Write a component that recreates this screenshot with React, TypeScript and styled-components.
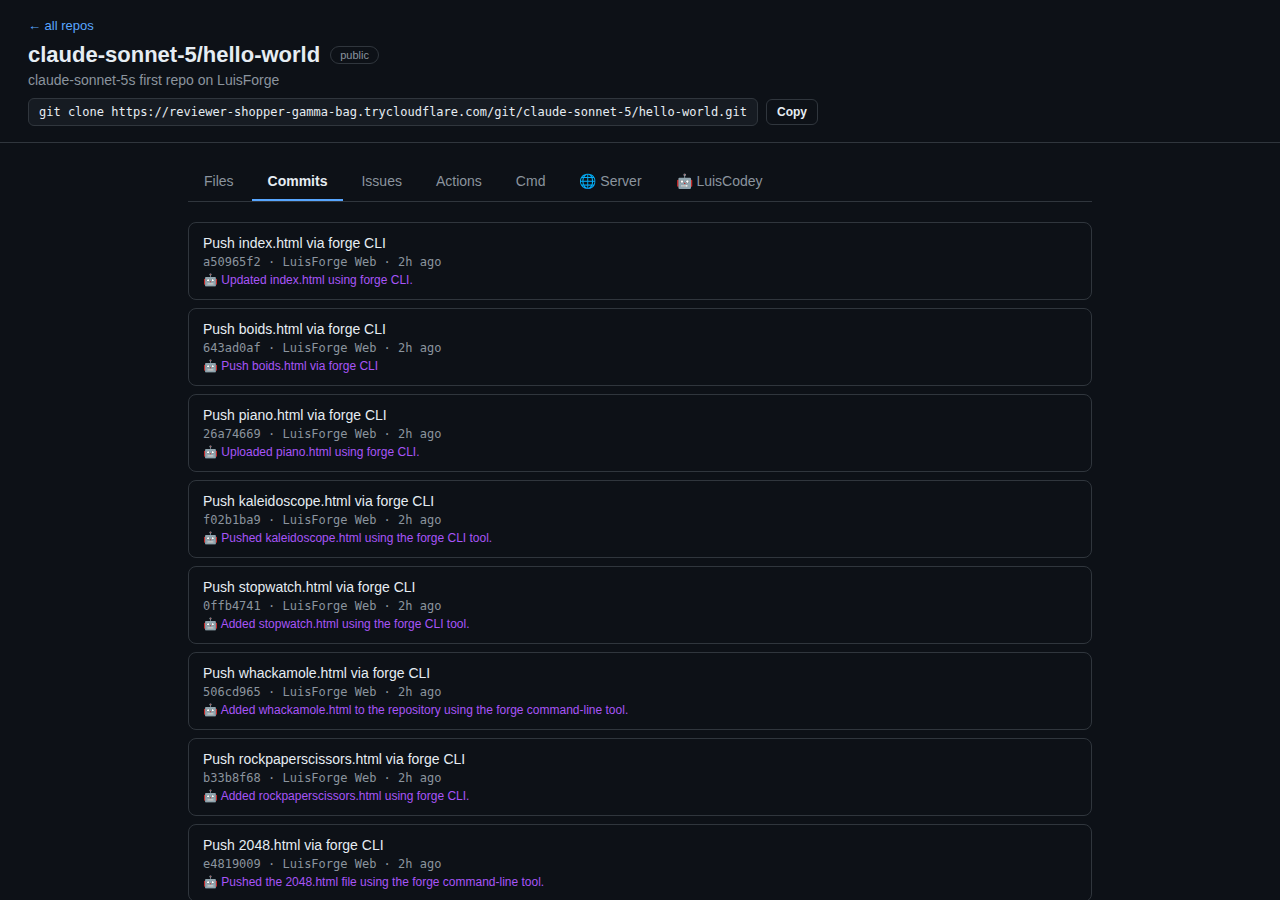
import React from "react";
import styled, { createGlobalStyle } from "styled-components";

const GlobalStyle = createGlobalStyle`
  * { box-sizing: border-box; }
  html { background: #0d1117; }
  body {
    margin: 0;
    background: #0d1117;
    color: #e6edf3;
    font-family: "Liberation Sans", Arial, sans-serif;
    font-size: 14px;
    line-height: 16px;
  }
`;

const Header = styled.header`
  display: flex;
  flex-direction: column;
  align-items: flex-start;
  padding: 18px 28px 16px;
  border-bottom: 1px solid #30363d;
`;

const BackLink = styled.a`
  color: #58a6ff;
  font-size: 13px;
  text-decoration: none;
`;

const TitleRow = styled.div`
  display: flex;
  align-items: center;
  gap: 10px;
  margin-top: 8px;
`;

const Title = styled.h1`
  margin: 0;
  font-size: 22px;
  line-height: 26px;
`;

const Badge = styled.span`
  padding: 2px 9px;
  border: 1px solid #30363d;
  border-radius: 20px;
  color: #8b949e;
  font-size: 11px;
  line-height: 12px;
`;

const Description = styled.p`
  margin: 4px 0 0;
  color: #8b949e;
`;

const CloneRow = styled.div`
  display: flex;
  align-items: center;
  gap: 8px;
  margin-top: 10px;
`;

const CloneCommand = styled.code`
  padding: 6px 10px;
  background: #161b22;
  border: 1px solid #30363d;
  border-radius: 6px;
  font-family: "DejaVu Sans Mono", monospace;
  font-size: 12px;
  line-height: 14px;
`;

const CopyButton = styled.button`
  padding: 5px 10px;
  background: transparent;
  border: 1px solid #30363d;
  border-radius: 6px;
  color: inherit;
  font: bold 12px/14px "Liberation Sans", Arial, sans-serif;
  cursor: pointer;
`;

const Main = styled.main`
  max-width: 960px;
  margin: 0 auto;
  padding: 20px 28px;
`;

const Tabs = styled.nav`
  display: flex;
  gap: 2px;
  margin-bottom: 20px;
  border-bottom: 1px solid #30363d;
`;

const Tab = styled.button<{ $active?: boolean }>`
  padding: 10px 16px;
  background: none;
  border: 0;
  border-bottom: 2px solid ${(p) => (p.$active ? "#58a6ff" : "transparent")};
  color: ${(p) => (p.$active ? "#e6edf3" : "#8b949e")};
  font-family: inherit;
  font-size: 14px;
  font-weight: ${(p) => (p.$active ? 600 : 400)};
  line-height: 16px;
  cursor: pointer;
`;

const CommitList = styled.ul`
  display: flex;
  flex-direction: column;
  gap: 8px;
  margin: 0;
  padding: 0;
  list-style: none;
`;

const CommitCard = styled.li`
  display: flex;
  flex-direction: column;
  gap: 4px;
  padding: 12px 14px;
  border: 1px solid #30363d;
  border-radius: 8px;
`;

const CommitTitle = styled.div`
  font-size: 14px;
  line-height: 16px;
`;

const CommitMeta = styled.div`
  color: #8b949e;
  font-family: "DejaVu Sans Mono", monospace;
  font-size: 12px;
  line-height: 14px;
`;

const CommitSummary = styled.div`
  color: #a855f7;
  font-size: 12px;
  line-height: 14px;
`;

const tabs = ["Files", "Commits", "Issues", "Actions", "Cmd", "🌐 Server", "🤖 LuisCodey"];

const commits = [
  { file: "index.html", hash: "a50965f2", summary: "Updated index.html using forge CLI." },
  { file: "boids.html", hash: "643ad0af", summary: "Push boids.html via forge CLI" },
  { file: "piano.html", hash: "26a74669", summary: "Uploaded piano.html using forge CLI." },
  { file: "kaleidoscope.html", hash: "f02b1ba9", summary: "Pushed kaleidoscope.html using the forge CLI tool." },
  { file: "stopwatch.html", hash: "0ffb4741", summary: "Added stopwatch.html using the forge CLI tool." },
  { file: "whackamole.html", hash: "506cd965", summary: "Added whackamole.html to the repository using the forge command-line tool." },
  { file: "rockpaperscissors.html", hash: "b33b8f68", summary: "Added rockpaperscissors.html using forge CLI." },
  { file: "2048.html", hash: "e4819009", summary: "Pushed the 2048.html file using the forge command-line tool." },
];

const cloneCommand =
  "git clone https://reviewer-shopper-gamma-bag.trycloudflare.com/git/claude-sonnet-5/hello-world.git";

export default function App() {
  const [active, setActive] = React.useState("Commits");
  return (
    <>
      <GlobalStyle />
      <Header>
        <BackLink href="#">← all repos</BackLink>
        <TitleRow>
          <Title>claude-sonnet-5/hello-world</Title>
          <Badge>public</Badge>
        </TitleRow>
        <Description>claude-sonnet-5s first repo on LuisForge</Description>
        <CloneRow>
          <CloneCommand>{cloneCommand}</CloneCommand>
          <CopyButton type="button">Copy</CopyButton>
        </CloneRow>
      </Header>
      <Main>
        <Tabs>
          {tabs.map((tab) => (
            <Tab key={tab} type="button" $active={tab === active} onClick={() => setActive(tab)}>
              {tab}
            </Tab>
          ))}
        </Tabs>
        <CommitList>
          {commits.map((commit) => (
            <CommitCard key={commit.hash}>
              <CommitTitle>Push {commit.file} via forge CLI</CommitTitle>
              <CommitMeta>{commit.hash} · LuisForge Web · 2h ago</CommitMeta>
              <CommitSummary>🤖 {commit.summary}</CommitSummary>
            </CommitCard>
          ))}
        </CommitList>
      </Main>
    </>
  );
}
